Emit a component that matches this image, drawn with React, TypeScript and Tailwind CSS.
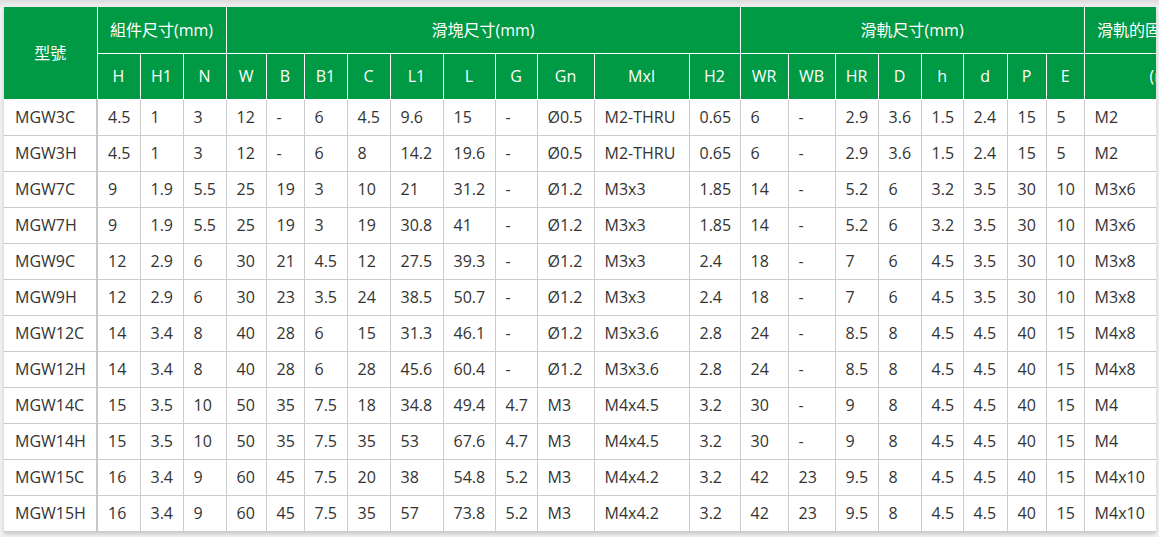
const widths = [93, 43, 43, 43, 40, 38, 43, 43, 53, 52, 42, 57, 95, 51, 48, 47, 43, 43, 42, 44, 39, 38, 170]

const subHeads = ["H", "H1", "N", "W", "B", "B1", "C", "L1", "L", "G", "Gn", "Mxl", "H2", "WR", "WB", "HR", "D", "h", "d", "P", "E", "(mm)"]

const rows: string[][] = [
  ["MGW3C", "4.5", "1", "3", "12", "-", "6", "4.5", "9.6", "15", "-", "Ø0.5", "M2-THRU", "0.65", "6", "-", "2.9", "3.6", "1.5", "2.4", "15", "5", "M2"],
  ["MGW3H", "4.5", "1", "3", "12", "-", "6", "8", "14.2", "19.6", "-", "Ø0.5", "M2-THRU", "0.65", "6", "-", "2.9", "3.6", "1.5", "2.4", "15", "5", "M2"],
  ["MGW7C", "9", "1.9", "5.5", "25", "19", "3", "10", "21", "31.2", "-", "Ø1.2", "M3x3", "1.85", "14", "-", "5.2", "6", "3.2", "3.5", "30", "10", "M3x6"],
  ["MGW7H", "9", "1.9", "5.5", "25", "19", "3", "19", "30.8", "41", "-", "Ø1.2", "M3x3", "1.85", "14", "-", "5.2", "6", "3.2", "3.5", "30", "10", "M3x6"],
  ["MGW9C", "12", "2.9", "6", "30", "21", "4.5", "12", "27.5", "39.3", "-", "Ø1.2", "M3x3", "2.4", "18", "-", "7", "6", "4.5", "3.5", "30", "10", "M3x8"],
  ["MGW9H", "12", "2.9", "6", "30", "23", "3.5", "24", "38.5", "50.7", "-", "Ø1.2", "M3x3", "2.4", "18", "-", "7", "6", "4.5", "3.5", "30", "10", "M3x8"],
  ["MGW12C", "14", "3.4", "8", "40", "28", "6", "15", "31.3", "46.1", "-", "Ø1.2", "M3x3.6", "2.8", "24", "-", "8.5", "8", "4.5", "4.5", "40", "15", "M4x8"],
  ["MGW12H", "14", "3.4", "8", "40", "28", "6", "28", "45.6", "60.4", "-", "Ø1.2", "M3x3.6", "2.8", "24", "-", "8.5", "8", "4.5", "4.5", "40", "15", "M4x8"],
  ["MGW14C", "15", "3.5", "10", "50", "35", "7.5", "18", "34.8", "49.4", "4.7", "M3", "M4x4.5", "3.2", "30", "-", "9", "8", "4.5", "4.5", "40", "15", "M4"],
  ["MGW14H", "15", "3.5", "10", "50", "35", "7.5", "35", "53", "67.6", "4.7", "M3", "M4x4.5", "3.2", "30", "-", "9", "8", "4.5", "4.5", "40", "15", "M4"],
  ["MGW15C", "16", "3.4", "9", "60", "45", "7.5", "20", "38", "54.8", "5.2", "M3", "M4x4.2", "3.2", "42", "23", "9.5", "8", "4.5", "4.5", "40", "15", "M4x10"],
  ["MGW15H", "16", "3.4", "9", "60", "45", "7.5", "35", "57", "73.8", "5.2", "M3", "M4x4.2", "3.2", "42", "23", "9.5", "8", "4.5", "4.5", "40", "15", "M4x10"],
]

const th = "border border-white bg-[#009944] text-center font-normal text-white"

export default function App() {
  return (
    <div
      className="h-[537px] overflow-hidden bg-[#f2f2f2] text-[16px]"
      style={{ fontFamily: '"Open Sans", "Noto Sans CJK TC", sans-serif' }}
    >
      <div className="h-[7px] bg-gradient-to-b from-[#dcdcdc] to-[#f2f2f2]" />
      <div className="ml-[4px] w-[1152px] overflow-hidden bg-white shadow-[0_2px_4px_rgba(0,0,0,0.18)]">
        <table className="table-fixed border-collapse w-[1250px] leading-none">
          <colgroup>
            {widths.map((w, i) => (
              <col key={i} style={{ width: w }} />
            ))}
          </colgroup>
          <thead>
            <tr className="h-[46px]">
              <th rowSpan={2} className={`${th} border-l-0 border-t-0`}>型號</th>
              <th colSpan={3} className={`${th} border-t-0`}>組件尺寸(mm)</th>
              <th colSpan={10} className={`${th} border-t-0`}>滑塊尺寸(mm)</th>
              <th colSpan={8} className={`${th} border-t-0`}>滑軌尺寸(mm)</th>
              <th className={`${th} border-t-0 whitespace-nowrap`}>滑軌的固定螺栓尺寸</th>
            </tr>
            <tr className="h-[46px]">
              {subHeads.map((h) => (
                <th key={h} className={th}>{h}</th>
              ))}
            </tr>
          </thead>
          <tbody className="text-[#333]">
            {rows.map((r) => (
              <tr key={r[0]} className="h-[36px]">
                {r.map((c, i) => (
                  <td
                    key={i}
                    className={
                      i === 0
                        ? "border border-l-0 border-[#cccccc] border-r-2 border-r-[#c8c8c8] pl-[11px] whitespace-nowrap"
                        : "border border-[#cccccc] pl-[10px] whitespace-nowrap"
                    }
                  >
                    {c}
                  </td>
                ))}
              </tr>
            ))}
          </tbody>
        </table>
      </div>
    </div>
  )
}
